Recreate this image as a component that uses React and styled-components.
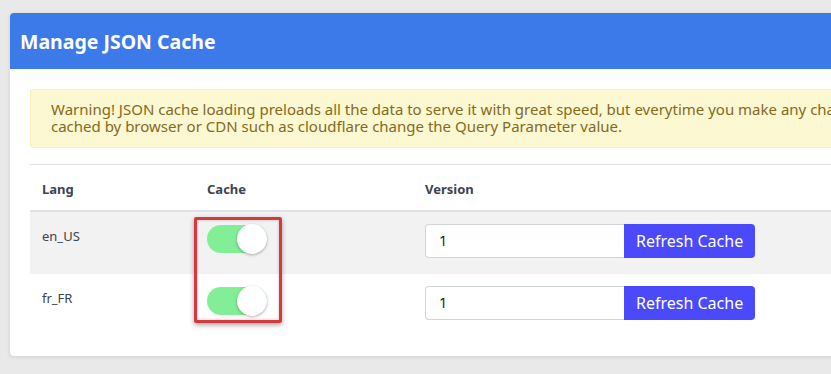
import React from "react";
import styled, { createGlobalStyle } from "styled-components";

const GlobalStyle = createGlobalStyle`
  html, body {
    margin: 0;
    padding: 0;
    background: #e9e9e9;
    overflow: hidden;
  }
  body {
    font-family: "Noto Sans", "Open Sans", sans-serif;
  }
`;

const Page = styled.div`
  padding: 13px 0 0 10px;
  height: 374px;
  box-sizing: border-box;
`;

const Card = styled.div`
  width: 1100px;
  background: #fff;
  border-radius: 4px;
  box-shadow: 0 1px 4px rgba(0, 0, 0, 0.12);
  padding-bottom: 20px;
`;

const Header = styled.div`
  height: 56px;
  background: #3b7ae8;
  border-radius: 4px 4px 0 0;
  display: flex;
  align-items: center;
  padding: 0 10px;

  h2 {
    margin: 0;
    color: #fff;
    font-size: 19.5px;
    font-weight: 700;
  }
`;

const Body = styled.div`
  padding: 20px 20px 0 20px;
`;

const Alert = styled.div`
  background: #fcf8d2;
  border: 1px solid #f8f0b4;
  border-radius: 3px;
  color: #856a1c;
  font-size: 15px;
  line-height: 17px;
  padding: 11px 20px 12px 20px;
  white-space: nowrap;
  overflow: hidden;
`;

const Table = styled.table`
  margin-top: 16px;
  width: 100%;
  border-collapse: collapse;
  border-top: 1px solid #dee2e6;
  color: #3c4352;
`;

const Th = styled.th`
  text-align: left;
  font-size: 13px;
  font-weight: 700;
  padding: 12px 12px 9px 12px;
  line-height: 24px;
  border-bottom: 2px solid #dee2e6;
  width: ${(p) => p.$w || "auto"};
`;

const Row = styled.tr`
  background: ${(p) => (p.$striped ? "#f2f2f2" : "#fff")};
`;

const Td = styled.td`
  vertical-align: top;
  font-size: 13px;
  padding: 12px 12px 16px 12px;
  line-height: 24px;
  position: relative;
`;

const Switch = styled.div`
  margin-top: 1px;
  width: 60px;
  height: 28px;
  border-radius: 14px;
  background: ${(p) => (p.$on ? "#82ee96" : "#ccc")};
  position: relative;

  &::after {
    content: "";
    position: absolute;
    top: -1px;
    ${(p) => (p.$on ? "right: 0;" : "left: 0;")}
    width: 30px;
    height: 30px;
    border-radius: 50%;
    background: #fff;
    box-shadow: 0 1px 3px rgba(0, 0, 0, 0.3);
  }
`;

const Highlight = styled.div`
  position: absolute;
  left: -1px;
  top: 5px;
  width: 82px;
  height: 100px;
  border: 3px solid #d9383a;
  border-radius: 2px;
  box-shadow: 0 2px 5px rgba(0, 0, 0, 0.35), inset 0 0 3px rgba(0, 0, 0, 0.25);
  pointer-events: none;
`;

const InputGroup = styled.div`
  display: flex;
  height: 34px;
`;

const VersionInput = styled.input`
  width: 199px;
  box-sizing: border-box;
  height: 34px;
  border: 1px solid #ced4da;
  border-right: none;
  border-radius: 4px 0 0 4px;
  padding: 0 14px;
  font-family: "Inter", "Noto Sans", sans-serif;
  font-size: 13px;
  color: #222;
  background: #fff;
  outline: none;
`;

const RefreshBtn = styled.button`
  height: 34px;
  border: none;
  border-radius: 0 4px 4px 0;
  background: #4a4afc;
  color: #fff;
  font-family: "Noto Sans", sans-serif;
  font-size: 16px;
  padding: 0 12px;
  cursor: pointer;
`;

const rows = [
  { lang: "en_US", version: "1" },
  { lang: "fr_FR", version: "1" },
];

export default function App() {
  return (
    <>
      <GlobalStyle />
      <Page>
        <Card>
          <Header>
            <h2>Manage JSON Cache</h2>
          </Header>
          <Body>
            <Alert>
              Warning! JSON cache loading preloads all the data to serve it with great speed, but everytime you make any changes, to avoid it being
              <br />
              cached by browser or CDN such as cloudflare change the Query Parameter value.
            </Alert>
            <Table>
              <thead>
                <tr>
                  <Th $w="141px">Lang</Th>
                  <Th $w="194px">Cache</Th>
                  <Th>Version</Th>
                </tr>
              </thead>
              <tbody>
                {rows.map((r, i) => (
                  <Row key={r.lang} $striped={i % 2 === 0}>
                    <Td>{r.lang}</Td>
                    <Td>
                      <Switch $on />
                      {i === 0 && <Highlight />}
                    </Td>
                    <Td>
                      <InputGroup>
                        <VersionInput defaultValue={r.version} />
                        <RefreshBtn>Refresh Cache</RefreshBtn>
                      </InputGroup>
                    </Td>
                  </Row>
                ))}
              </tbody>
            </Table>
          </Body>
        </Card>
      </Page>
    </>
  );
}
